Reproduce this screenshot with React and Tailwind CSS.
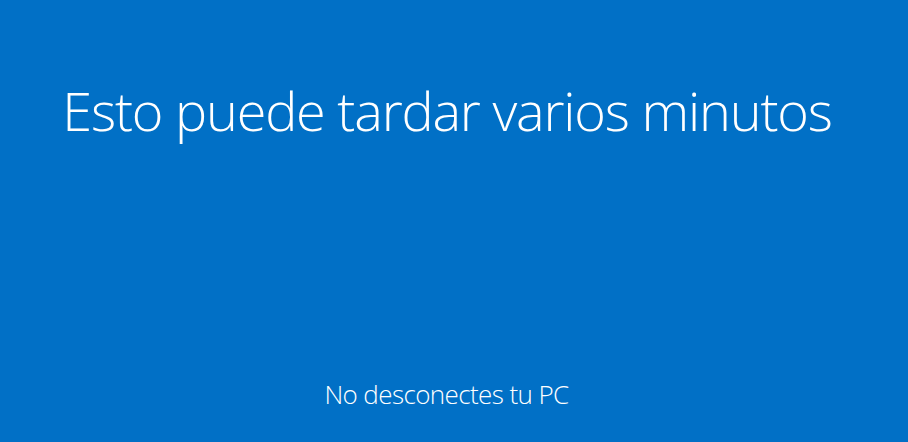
export default function App() {
  return (
    <div className="w-[908px] h-[442px] bg-[#0170c6] text-white flex flex-col items-center overflow-hidden" style={{ fontFamily: '"Open Sans", "Noto Sans", sans-serif' }}>
      <div className="mt-[74px] ml-[-14px] text-[54px] font-light leading-[72px] tracking-[-1.2px] whitespace-nowrap">
        Esto puede tardar varios minutos
      </div>
      <div className="mt-[230px] ml-[-15px] text-[26px] font-light leading-[36px] tracking-[-0.6px] whitespace-nowrap">
        No desconectes tu PC
      </div>
    </div>
  );
}
